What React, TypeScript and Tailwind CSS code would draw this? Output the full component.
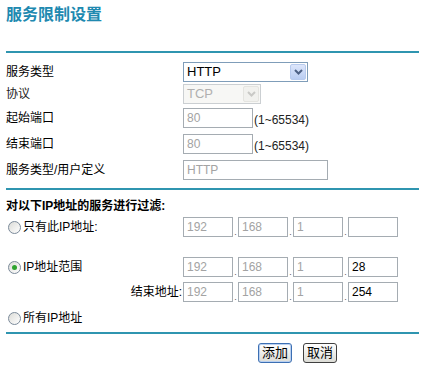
import React from "react";

const FONT = "[font-family:'Liberation_Sans','Noto_Sans_CJK_SC',sans-serif]";

function Box({ value, w, gray = true }: { value: string; w: string; gray?: boolean }) {
  return (
    <input
      readOnly
      value={value}
      className={`${w} h-[20px] border border-[#a5acb2] bg-white px-[3px] text-[12px] outline-none ${
        gray ? "text-[#a3a3a3]" : "text-black"
      }`}
    />
  );
}

function IpRow({ last }: { last: string }) {
  return (
    <div className="flex items-end">
      <Box value="192" w="w-[50px]" />
      <span className="w-[5px] text-center text-[9px] leading-[10px] text-[#555]">.</span>
      <Box value="168" w="w-[50px]" />
      <span className="w-[5px] text-center text-[9px] leading-[10px] text-[#555]">.</span>
      <Box value="1" w="w-[50px]" />
      <span className="w-[5px] text-center text-[9px] leading-[10px] text-[#555]">.</span>
      <Box value={last} w="w-[50px]" gray={false} />
    </div>
  );
}

function Radio({ checked }: { checked?: boolean }) {
  return (
    <span className="flex h-[13px] w-[13px] items-center justify-center rounded-full border border-[#7b8a9a] bg-gradient-to-br from-[#dcdcd8] to-white">
      {checked && <span className="h-[5px] w-[5px] rounded-full bg-[#2fa32f]" />}
    </span>
  );
}

function Chevron({ color }: { color: string }) {
  return (
    <svg width="9" height="6" viewBox="0 0 9 6">
      <path d="M1 1 L4.5 4.5 L8 1" fill="none" stroke={color} strokeWidth="2" />
    </svg>
  );
}

export default function App() {
  return (
    <div className={`w-[445px] h-[375px] bg-white pl-[6px] text-[12px] text-black ${FONT}`}>
      {/* 标题 */}
      <h1 className="pt-[5px] text-[16px] leading-[20px] font-bold text-[#2089b0] tracking-[0px]">
        服务限制设置
      </h1>
      <div className="mt-[26px] h-[2px] w-[413px] bg-[#2f95b0]" />

      {/* 服务类型 */}
      <div className="mt-[9px] flex h-[20px] items-center">
        <span className="w-[177px]">服务类型</span>
        <div className="flex h-[20px] w-[125px] items-center justify-between border border-[#7f9db9] bg-white pl-[3px] pr-[1px] text-[13px]">
          <span>HTTP</span>
          <span className="flex h-[16px] w-[16px] items-center justify-center rounded-[2px] border border-[#b8cbee] bg-gradient-to-b from-[#dde6fb] to-[#b9cdf2]">
            <Chevron color="#4d6185" />
          </span>
        </div>
      </div>

      {/* 协议 */}
      <div className="mt-[2px] flex h-[20px] items-center">
        <span className="w-[177px] text-[#222]">协议</span>
        <div className="flex h-[20px] w-[78px] items-center justify-between border border-[#cbcfd2] bg-[#f7f7f5] pl-[3px] pr-[1px] text-[13px] text-[#b0b0b0]">
          <span>TCP</span>
          <span className="flex h-[16px] w-[16px] items-center justify-center rounded-[2px] border border-[#e4e4e0] bg-[#f1f1ee]">
            <Chevron color="#c9c9c6" />
          </span>
        </div>
      </div>

      {/* 起始端口 */}
      <div className="mt-[4px] flex h-[20px] items-center">
        <span className="w-[177px]">起始端口</span>
        <Box value="80" w="w-[70px]" />
        <span className="ml-[1px] mt-[4px] text-[#222]">(1~65534)</span>
      </div>

      {/* 结束端口 */}
      <div className="mt-[6px] flex h-[20px] items-center">
        <span className="w-[177px]">结束端口</span>
        <Box value="80" w="w-[70px]" />
        <span className="ml-[1px] mt-[4px] text-[#222]">(1~65534)</span>
      </div>

      {/* 服务类型/用户定义 */}
      <div className="mt-[6px] flex h-[20px] items-center">
        <span className="w-[177px]">服务类型/用户定义</span>
        <Box value="HTTP" w="w-[145px]" />
      </div>

      <div className="mt-[8px] h-[2px] w-[413px] bg-[#2f95b0]" />

      <div className="mt-[7px] flex h-[18px] items-center font-bold">对以下IP地址的服务进行过滤:</div>

      {/* 只有此IP地址 */}
      <div className="mt-[2px] flex h-[20px] items-center">
        <div className="flex w-[177px] items-center gap-[2px] pl-[2px]">
          <Radio />
          <span>只有此IP地址:</span>
        </div>
        <IpRow last="" />
      </div>

      {/* IP地址范围 */}
      <div className="mt-[20px] flex h-[20px] items-center">
        <div className="flex w-[177px] items-center gap-[2px] pl-[2px]">
          <Radio checked />
          <span>IP地址范围</span>
        </div>
        <IpRow last="28" />
      </div>
      <div className="mt-[5px] flex h-[20px] items-center">
        <span className="w-[177px] pr-[1px] text-right">结束地址:</span>
        <IpRow last="254" />
      </div>

      {/* 所有IP地址 */}
      <div className="mt-[7px] flex h-[18px] items-center gap-[2px] pl-[2px]">
        <Radio />
        <span>所有IP地址</span>
      </div>

      <div className="mt-[5px] h-[2px] w-[413px] bg-[#2f95b0]" />

      {/* 按钮 */}
      <div className="mt-[9px] flex gap-[11px] pl-[252px]">
        <button className="h-[20px] w-[34px] rounded-[3px] border border-[#3c6fb3] bg-gradient-to-b from-white to-[#dcdcd6] text-[13px] leading-[16px] shadow-[inset_0_0_0_1px_#b9d0f0]">
          添加
        </button>
        <button className="h-[20px] w-[34px] rounded-[3px] border border-[#404040] bg-gradient-to-b from-white to-[#dcdcd6] text-[13px] leading-[16px]">
          取消
        </button>
      </div>
    </div>
  );
}
